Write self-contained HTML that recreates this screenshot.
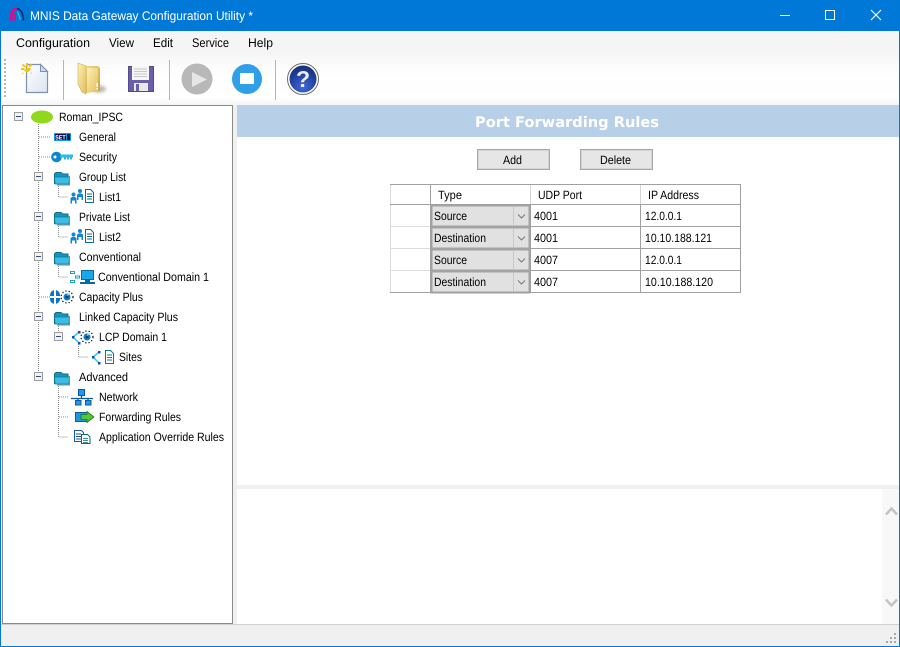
<!DOCTYPE html>
<html><head><meta charset="utf-8"><title>MNIS Data Gateway Configuration Utility</title>
<style>
html,body{margin:0;padding:0;background:#fff;width:900px;height:647px;overflow:hidden}
svg{display:block}
text{font-family:"Liberation Sans",sans-serif;font-size:12px;fill:#000}
.m{font-size:12.5px;fill:#000}
</style></head><body>
<svg width="900" height="647" viewBox="0 0 900 647" xmlns="http://www.w3.org/2000/svg" text-rendering="geometricPrecision">
<defs>
<linearGradient id="tb" x1="0" y1="0" x2="0" y2="1"><stop offset="0" stop-color="#f7f7f7"/><stop offset=".3" stop-color="#fdfdfd"/><stop offset=".85" stop-color="#ffffff"/><stop offset="1" stop-color="#f4f4f4"/></linearGradient>
<linearGradient id="fold" x1="0" y1="0" x2="1" y2="1"><stop offset="0" stop-color="#fdf0b8"/><stop offset="1" stop-color="#e2bf5c"/></linearGradient>
<linearGradient id="fold2" x1="0" y1="0" x2="1" y2="1"><stop offset="0" stop-color="#f6e08e"/><stop offset="1" stop-color="#c89f3c"/></linearGradient>
<linearGradient id="page" x1="0" y1="0" x2="1" y2="1"><stop offset="0" stop-color="#ffffff"/><stop offset="1" stop-color="#dbe4f1"/></linearGradient>
<radialGradient id="help" cx="0.5" cy="0.8" r="0.9"><stop offset="0" stop-color="#3f68d8"/><stop offset=".6" stop-color="#1f3d96"/><stop offset="1" stop-color="#152a70"/></radialGradient>
<filter id="blur" x="-30%" y="-60%" width="160%" height="220%"><feGaussianBlur stdDeviation="1.500"/></filter>
<g id="minus"><rect x="0.500" y="0.500" width="8" height="8" fill="#f2f2f2" stroke="#9c9c9c"/><path d="M2 4.500h5" stroke="#2b4f7e" fill="none"/></g>
<g id="folder"><path d="M0.500 12.500V3L2 1.500h5L8.500 3H14V12.500z" fill="#1796bd" stroke="#0b6c8b"/><path d="M0.500 6h15L15 13H1z" fill="#3dbce4" stroke="#0b7a9c" stroke-width=".8"/><path d="M15.500 5v9H3" fill="none" stroke="#5a98a8" stroke-width="1"/></g>
<g id="people"><circle cx="3.500" cy="5.500" r="2" fill="#0f86d6"/><path d="M0.500 14.500V9Q3.500 6.500 6.500 9V14.500H5V11.500H2V14.500z" fill="#0f86d6"/><circle cx="10" cy="2" r="2" fill="#0f86d6"/><path d="M7 11V5.500Q10 3 13 5.500V11H11.500V8H8.500V11z" fill="#0f86d6"/><path d="M15.500 0.500h5l3 3v10h-8z" fill="#fff" stroke="#0b6c8b"/><path d="M17 5h5M17 7.500h5M17 10h5" stroke="#0b6c8b" fill="none"/></g>
<g id="doc"><path d="M0.500 0.500h5l3 3v10h-8z" fill="#fff" stroke="#0b7c8b"/><path d="M2 5h5M2 7.500h5M2 10h5" stroke="#0b7c8b" fill="none"/></g>
<g id="wheel"><circle cx="5" cy="5" r="3.500" fill="#0c80c8"/><circle cx="5" cy="5" r="1.500" fill="#123a70"/><path d="M5 3.500L8 1" stroke="#aee4f8"/><circle cx="5" cy="5" r="6" fill="none" stroke="#111" stroke-width="1.200" stroke-dasharray="1.300 2"/></g>
<g id="sel"><rect x="431.500" y="0.500" width="98" height="21" fill="#e1e1e1" stroke="#a3a3a3" stroke-width="2"/><rect x="513" y="1" width="1" height="20" fill="#c8c8c8"/><path d="M518 9.500l3.500 3.500 3.500-3.500" fill="none" stroke="#777" stroke-width="1"/></g>
</defs>

<!-- window -->
<rect width="900" height="647" fill="#0078d7"/>
<rect x="1" y="31" width="898" height="615" fill="#f0f0f0"/>
<!-- title -->
<path d="M11.500 20.500Q10 9.500 17 8.500" fill="none" stroke="#d0108c" stroke-width="3"/>
<path d="M15 13V20.500" stroke="#d0108c" stroke-width="2"/>
<path d="M17 8.500Q23 10 23.500 20.500" fill="none" stroke="#14246c" stroke-width="1.500"/>
<path d="M17.500 11.500L20.500 20" stroke="#28c4dc" stroke-width="1.200"/>
<text x="30" y="20" textLength="223" lengthAdjust="spacingAndGlyphs" style="fill:#fff;font-size:12.500px">MNIS Data Gateway Configuration Utility *</text>
<rect x="780" y="15" width="10" height="1" fill="#fff"/>
<rect x="825.500" y="10.500" width="9" height="9" fill="none" stroke="#fff"/>
<path d="M871 10l10 10M881 10l-10 10" stroke="#fff" stroke-width="1.100" fill="none"/>
<!-- menu -->
<rect x="1" y="31" width="898" height="24" fill="#f5f5f5"/>
<text class="m" x="16" y="47" textLength="74" lengthAdjust="spacingAndGlyphs">Configuration</text>
<text class="m" x="109" y="47" textLength="25" lengthAdjust="spacingAndGlyphs">View</text>
<text class="m" x="153" y="47" textLength="20" lengthAdjust="spacingAndGlyphs">Edit</text>
<text class="m" x="192" y="47" textLength="37" lengthAdjust="spacingAndGlyphs">Service</text>
<text class="m" x="248" y="47" textLength="25" lengthAdjust="spacingAndGlyphs">Help</text>
<!-- toolbar -->
<rect x="1" y="55" width="898" height="50" fill="url(#tb)"/>
<path d="M5 59v38" stroke="#b4b4b4" stroke-width="2" stroke-dasharray="2 2" fill="none"/>
<rect x="63" y="60" width="1" height="40" fill="#b5b5b5"/>
<rect x="169" y="60" width="1" height="40" fill="#b5b5b5"/>
<rect x="275" y="60" width="1" height="40" fill="#b5b5b5"/>
<!-- new -->
<path d="M26.500 64.500h14l7 7v21h-21z" fill="url(#page)" stroke="#7d92ad" stroke-width="1.200"/>
<path d="M40.500 64.500v7h7z" fill="#cfd9e8" stroke="#7d92ad"/>
<path d="M21 69h12M27 63v12M22.500 64.500l9 9M31.500 64.500l-9 9" stroke="#f3c31c" stroke-width="2" stroke-dasharray="3.500 2.500"/>
<!-- folder -->
<ellipse cx="99" cy="89" rx="7" ry="3.500" fill="#b8b8b8" filter="url(#blur)"/>
<path d="M84 66h14l2 2v23l-14 2z" fill="url(#fold2)"/>
<path d="M78 63l8 3 0 28-4-2-4-8z" fill="url(#fold)" stroke="#cfae52" stroke-width=".6"/>
<path d="M87 68h11v23L87 93z" fill="url(#fold)"/>
<rect x="96.500" y="83" width="1.500" height="4" fill="#fff"/><rect x="96.500" y="88" width="1.500" height="1.500" fill="#fff"/>
<!-- save -->
<path d="M128.500 66.500h25v25h-25z" fill="#6a5fa8" stroke="#54498e"/>
<rect x="132" y="66" width="17" height="14" fill="#f6f6f6"/>
<path d="M134 69h13M134 71.500h13M134 74h13M134 76.500h13" stroke="#c8c8c8"/>
<rect x="134" y="83" width="14" height="8" fill="#e8e8e8"/>
<rect x="136" y="84" width="3" height="7" fill="#6a5fa8"/>
<!-- play -->
<circle cx="197" cy="79" r="15.500" fill="#b8b8b8"/>
<path d="M192 72l15 7.500-15 7.500z" fill="#e6e6e6"/>
<!-- stop -->
<circle cx="247" cy="79" r="15" fill="#2f9fe9"/>
<rect x="240" y="73" width="14" height="11" fill="#fff"/>
<!-- help -->
<circle cx="303" cy="79" r="15.500" fill="#fff" stroke="#6c6c6c" stroke-width="1"/>
<circle cx="303" cy="79" r="13.500" fill="url(#help)"/>
<text x="303" y="87" text-anchor="middle" style="font-size:23px;font-weight:bold;fill:#ececec">?</text>

<!-- tree panel -->
<rect x="2.500" y="105.500" width="230" height="518" fill="#fff" stroke="#8a8a8a"/>
<g stroke="#8c8c8c" stroke-dasharray="1 1" fill="none">
<path d="M38.500 122V381"/>
<path d="M39 137h11M39 157h11"/>
<path d="M58.500 182V197H68M58.500 222V237H68M58.500 262V277H68"/>
<path d="M39 297h11"/>
<path d="M58.500 322V333M78.500 342V357H88M58.500 382V437H68M59 397h10M59 417h10"/>
</g>
<use href="#minus" x="14" y="112"/>
<ellipse cx="42" cy="117" rx="11" ry="6.500" fill="#8fd81c"/>
<text x="59" y="121" textLength="64" lengthAdjust="spacingAndGlyphs">Roman_IPSC</text>
<!-- general -->
<rect x="54" y="133" width="17" height="8" fill="#1199e8"/><rect x="55" y="134" width="11" height="6" fill="#101050"/>
<text x="55.300" y="139.700" textLength="10.500" lengthAdjust="spacingAndGlyphs" style="font-size:6.500px;font-weight:bold;fill:#fff;font-family:'Liberation Mono',monospace">SET</text>
<rect x="67" y="134" width="3" height="6" fill="#101050"/>
<text x="79" y="141" textLength="37" lengthAdjust="spacingAndGlyphs">General</text>
<!-- security -->
<circle cx="56.500" cy="157" r="5.300" fill="#0b86d0"/><circle cx="55" cy="157" r="1.500" fill="#fff"/>
<path d="M60 154.500h13v3h-1v2h-2v-2h-1v2h-2v-2h-1v2h-2v-2h-4z" fill="#2ab8ec"/>
<text x="79" y="161" textLength="38" lengthAdjust="spacingAndGlyphs">Security</text>
<!-- group list -->
<use href="#minus" x="34" y="172"/><use href="#folder" x="54" y="171"/>
<text x="79" y="181" textLength="47" lengthAdjust="spacingAndGlyphs">Group List</text>
<use href="#people" x="70" y="189"/>
<text x="99" y="201" textLength="22" lengthAdjust="spacingAndGlyphs">List1</text>
<!-- private -->
<use href="#minus" x="34" y="212"/><use href="#folder" x="54" y="211"/>
<text x="79" y="221" textLength="51" lengthAdjust="spacingAndGlyphs">Private List</text>
<use href="#people" x="70" y="229"/>
<text x="99" y="241" textLength="22" lengthAdjust="spacingAndGlyphs">List2</text>
<!-- conventional -->
<use href="#minus" x="34" y="252"/><use href="#folder" x="54" y="251"/>
<text x="79" y="261" textLength="62" lengthAdjust="spacingAndGlyphs">Conventional</text>
<g fill="none" stroke="#16a8b8"><rect x="70.500" y="271.500" width="4" height="2"/><rect x="70.500" y="280.500" width="4" height="2"/><rect x="75.500" y="276" width="4" height="2"/></g>
<rect x="81.500" y="270.500" width="12" height="9" fill="#1aa6ea" stroke="#0b6c9b"/><rect x="80" y="282" width="15" height="2" fill="#0b6c9b"/><rect x="85" y="280" width="5" height="2" fill="#0b6c9b"/>
<text x="98" y="281" textLength="111" lengthAdjust="spacingAndGlyphs">Conventional Domain 1</text>
<!-- capacity plus -->
<rect x="50" y="290" width="10" height="14" rx="5" fill="#0c72d0"/><path d="M55 290v14M50 297h10" stroke="#fff" stroke-width="2"/>
<use href="#wheel" x="62" y="292"/>
<text x="79" y="301" textLength="64" lengthAdjust="spacingAndGlyphs">Capacity Plus</text>
<!-- linked -->
<use href="#minus" x="34" y="312"/><use href="#folder" x="54" y="311"/>
<text x="79" y="321" textLength="99" lengthAdjust="spacingAndGlyphs">Linked Capacity Plus</text>
<!-- LCP -->
<use href="#minus" x="54" y="332"/>
<path d="M79 332l-6 5 6 6" fill="none" stroke="#22d4ec" stroke-width="1.500"/><rect x="78" y="331" width="2.500" height="2.500" fill="#0c4fc0"/><rect x="72" y="336" width="2.500" height="2.500" fill="#0c4fc0"/><rect x="78" y="342" width="2.500" height="2.500" fill="#0c4fc0"/>
<use href="#wheel" x="82" y="332"/>
<text x="99" y="341" textLength="68" lengthAdjust="spacingAndGlyphs">LCP Domain 1</text>
<path d="M99 352l-6 5 6 6" fill="none" stroke="#22d4ec" stroke-width="1.500"/><rect x="98" y="351" width="2.500" height="2.500" fill="#0c4fc0"/><rect x="92" y="356" width="2.500" height="2.500" fill="#0c4fc0"/><rect x="98" y="362" width="2.500" height="2.500" fill="#0c4fc0"/>
<use href="#doc" x="105" y="350"/>
<text x="119" y="361" textLength="23" lengthAdjust="spacingAndGlyphs">Sites</text>
<!-- advanced -->
<use href="#minus" x="34" y="372"/><use href="#folder" x="54" y="371"/>
<text x="79" y="381" textLength="49" lengthAdjust="spacingAndGlyphs">Advanced</text>
<!-- network -->
<rect x="78.500" y="389.500" width="6" height="6" fill="#1f9aea" stroke="#0c5aa8"/><path d="M81.500 396v2M71 398.500h22M78 399v1M88 399v1" stroke="#0c5aa8" fill="none" stroke-width="1.300"/><rect x="75.500" y="400.500" width="5.500" height="4.500" fill="#1f9aea" stroke="#0c5aa8"/><rect x="85.500" y="400.500" width="5.500" height="4.500" fill="#1f9aea" stroke="#0c5aa8"/>
<text x="99" y="401" textLength="39" lengthAdjust="spacingAndGlyphs">Network</text>
<!-- forwarding -->
<rect x="75.500" y="412.500" width="12" height="9" fill="#1f96e4" stroke="#0c5aa8"/>
<path d="M81 414.500h6V411.500l7 5.500-7 5.500V419.500h-6z" fill="#52c838" stroke="#1f7a18" stroke-width=".8"/>
<text x="99" y="421" textLength="82" lengthAdjust="spacingAndGlyphs">Forwarding Rules</text>
<!-- app -->
<path d="M74.500 430.500h7l2 2v9h-9z" fill="#fff" stroke="#1a5a9a"/><path d="M76 434h5M76 436.500h5M76 439h5" stroke="#1a5a9a"/>
<path d="M81.500 434.500h6l2.500 2.500v6.500h-8.500z" fill="#fff" stroke="#0b6c6b"/><path d="M83 438.500h5M83 440.500h5M83 442.500h5" stroke="#0b6c6b" stroke-width=".8"/>
<text x="99" y="441" textLength="125" lengthAdjust="spacingAndGlyphs">Application Override Rules</text>

<!-- right -->
<rect x="237" y="105" width="662" height="380" fill="#fff"/>
<rect x="237" y="105" width="662" height="32" fill="#b8cfe8"/>
<text x="475" y="127" textLength="184" lengthAdjust="spacingAndGlyphs" style="font-family:'DejaVu Sans',sans-serif;font-weight:bold;font-size:14.500px;fill:#fff">Port Forwarding Rules</text>
<!-- buttons -->
<rect x="477.500" y="149.500" width="72" height="20" fill="#e6e6e6" stroke="#a8a8a8"/><rect x="478.500" y="150.500" width="70" height="18" fill="none" stroke="#d4d4d4"/>
<text x="503" y="164" textLength="19" lengthAdjust="spacingAndGlyphs">Add</text>
<rect x="580.500" y="149.500" width="72" height="20" fill="#e6e6e6" stroke="#a8a8a8"/><rect x="581.500" y="150.500" width="70" height="18" fill="none" stroke="#d4d4d4"/>
<text x="600" y="164" textLength="31" lengthAdjust="spacingAndGlyphs">Delete</text>
<!-- table -->
<g>
<use href="#sel" y="205"/><use href="#sel" y="227"/><use href="#sel" y="249"/><use href="#sel" y="271"/>
<path d="M390.500 184.500V293M391 226.500H430M391 248.500H430M391 270.500H430" fill="none" stroke="#dcdcdc"/>
<g fill="none" stroke="#a0a0a0">
<path d="M390 184.500H740.500V292.500H390M390 204.500H741M430.500 184V293M530.500 204V293M640.500 204V293M530 226.500H741M530 248.500H741M530 270.500H741"/>
</g>
<path d="M530.500 185V204M640.500 185V204" stroke="#d4d4d4" fill="none"/>
</g>
<text x="438" y="199" textLength="24" lengthAdjust="spacingAndGlyphs">Type</text>
<text x="538" y="199" textLength="44" lengthAdjust="spacingAndGlyphs">UDP Port</text>
<text x="648" y="199" textLength="51" lengthAdjust="spacingAndGlyphs">IP Address</text>
<text x="434" y="220" textLength="33" lengthAdjust="spacingAndGlyphs">Source</text>
<text x="434" y="242" textLength="52" lengthAdjust="spacingAndGlyphs">Destination</text>
<text x="434" y="264" textLength="33" lengthAdjust="spacingAndGlyphs">Source</text>
<text x="434" y="286" textLength="52" lengthAdjust="spacingAndGlyphs">Destination</text>
<text x="534" y="220" textLength="24" lengthAdjust="spacingAndGlyphs">4001</text>
<text x="534" y="242" textLength="24" lengthAdjust="spacingAndGlyphs">4001</text>
<text x="534" y="264" textLength="24" lengthAdjust="spacingAndGlyphs">4007</text>
<text x="534" y="286" textLength="24" lengthAdjust="spacingAndGlyphs">4007</text>
<text x="645" y="220" textLength="37" lengthAdjust="spacingAndGlyphs">12.0.0.1</text>
<text x="645" y="242" textLength="67" lengthAdjust="spacingAndGlyphs">10.10.188.121</text>
<text x="645" y="264" textLength="37" lengthAdjust="spacingAndGlyphs">12.0.0.1</text>
<text x="645" y="286" textLength="68" lengthAdjust="spacingAndGlyphs">10.10.188.120</text>

<!-- splitter / log -->
<rect x="237" y="485" width="662" height="4" fill="#f0f0f0"/>
<rect x="237" y="489" width="662" height="135" fill="#fff"/>
<rect x="882" y="489" width="17" height="135" fill="#f8f8f8"/>
<path d="M886 514.500l5.500-6 5.500 6" fill="none" stroke="#c4c4c4" stroke-width="2.500"/>
<path d="M886 599.500l5.500 6 5.500-6" fill="none" stroke="#c4c4c4" stroke-width="2.500"/>
<!-- status -->
<rect x="1" y="624" width="898" height="1" fill="#d0d0d0"/>
<rect x="1" y="625" width="898" height="21" fill="#f0f0f0"/>
<g fill="#a8a8a8"><rect x="894" y="633" width="2" height="2"/><rect x="890" y="637" width="2" height="2"/><rect x="894" y="637" width="2" height="2"/><rect x="886" y="641" width="2" height="2"/><rect x="890" y="641" width="2" height="2"/><rect x="894" y="641" width="2" height="2"/></g>
</svg>
</body></html>
